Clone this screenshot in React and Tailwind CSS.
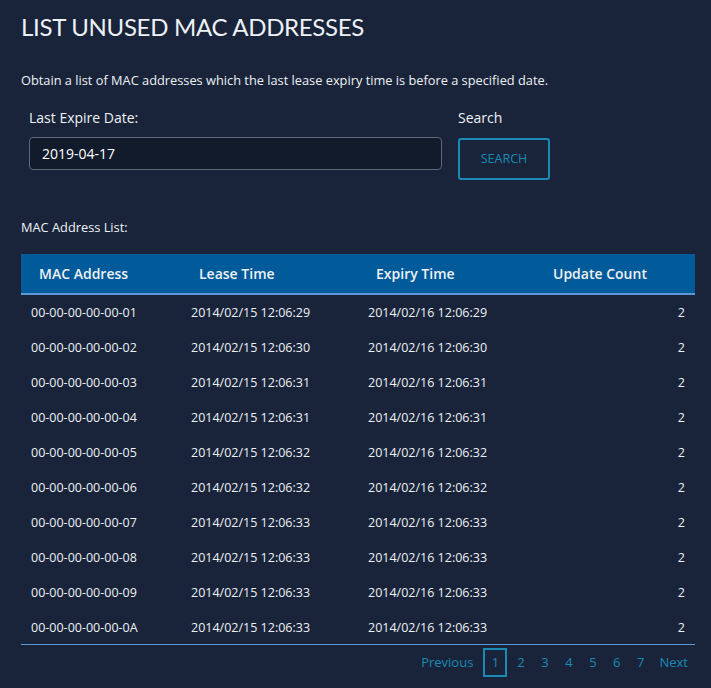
import React from "react";

const rows = [
    ["00-00-00-00-00-01", "2014/02/15 12:06:29", "2014/02/16 12:06:29", 2],
    ["00-00-00-00-00-02", "2014/02/15 12:06:30", "2014/02/16 12:06:30", 2],
    ["00-00-00-00-00-03", "2014/02/15 12:06:31", "2014/02/16 12:06:31", 2],
    ["00-00-00-00-00-04", "2014/02/15 12:06:31", "2014/02/16 12:06:31", 2],
    ["00-00-00-00-00-05", "2014/02/15 12:06:32", "2014/02/16 12:06:32", 2],
    ["00-00-00-00-00-06", "2014/02/15 12:06:32", "2014/02/16 12:06:32", 2],
    ["00-00-00-00-00-07", "2014/02/15 12:06:33", "2014/02/16 12:06:33", 2],
    ["00-00-00-00-00-08", "2014/02/15 12:06:33", "2014/02/16 12:06:33", 2],
    ["00-00-00-00-00-09", "2014/02/15 12:06:33", "2014/02/16 12:06:33", 2],
    ["00-00-00-00-00-0A", "2014/02/15 12:06:33", "2014/02/16 12:06:33", 2],
];

function App() {
    return (
        <div className="min-h-screen w-full bg-[#19243a] text-[#eef1f5] px-[21px] pt-[12px] font-['Open_Sans',sans-serif]">
            <h1 className="font-['Lato',sans-serif] text-[24px] leading-[30px] tracking-[-0.3px] text-[#eef1f5]">
                LIST UNUSED MAC ADDRESSES
            </h1>

            <p className="mt-[29px] text-[12.8px] leading-[18px]">
                Obtain a list of MAC addresses which the last lease expiry time is before a specified date.
            </p>

            <div className="mt-[19px] flex items-start">
                <div className="ml-[8px] w-[413px]">
                    <label className="block text-[14px] leading-[20px]">Last Expire Date:</label>
                    <input
                        type="text"
                        defaultValue="2019-04-17"
                        className="mt-[9px] w-full h-[33px] rounded-[4px] border border-[#5f6878] bg-[#121b2c] px-[12px] text-[14px] text-white outline-none"
                    />
                </div>
                <div className="ml-[16px]">
                    <label className="block text-[14px] leading-[20px]">Search</label>
                    <button className="mt-[10px] w-[92px] h-[42px] rounded-[3px] border-2 border-[#1a8ab5] text-[12.5px] text-[#1a8ab5]">
                        SEARCH
                    </button>
                </div>
            </div>

            <p className="mt-[38px] text-[12.8px] leading-[18px]">MAC Address List:</p>

            <table className="mt-[18px] w-[674px] border-collapse table-fixed">
                <thead>
                    <tr className="h-[40px] bg-[#015a99] border-b-2 border-[#5b9ad8]">
                        <th className="w-[160px] pl-[18px] text-left text-[14px] font-semibold">MAC Address</th>
                        <th className="w-[177px] pl-[18px] text-left text-[14px] font-semibold">Lease Time</th>
                        <th className="w-[177px] pl-[18px] text-left text-[14px] font-semibold">Expiry Time</th>
                        <th className="w-[160px] pl-[18px] text-left text-[14px] font-semibold">Update Count</th>
                    </tr>
                </thead>
                <tbody>
                    {rows.map((r, i) => (
                        <tr key={i} className="h-[35px] text-[12.5px]">
                            <td className="pl-[10px] pt-[3px]">{r[0]}</td>
                            <td className="pl-[10px] pt-[3px]">{r[1]}</td>
                            <td className="pl-[10px] pt-[3px]">{r[2]}</td>
                            <td className="pr-[10px] pt-[3px] text-right">{r[3]}</td>
                        </tr>
                    ))}
                </tbody>
            </table>
            <div className="w-[674px] border-t border-[#5b9ad8]"></div>

            <div className="w-[674px] flex justify-end items-center mt-[3px] text-[13px] text-[#1a8ab5] pr-[7px]">
                <span className="mr-[10px]">Previous</span>
                <span className="w-[24px] h-[29px] flex items-center justify-center border-2 border-[#1a8ab5]">1</span>
                <span className="ml-[10px]">2</span>
                <span className="ml-[16.5px]">3</span>
                <span className="ml-[16.5px]">4</span>
                <span className="ml-[16.5px]">5</span>
                <span className="ml-[16.5px]">6</span>
                <span className="ml-[16.5px]">7</span>
                <span className="ml-[15px]">Next</span>
            </div>
        </div>
    );
}

export default App;
